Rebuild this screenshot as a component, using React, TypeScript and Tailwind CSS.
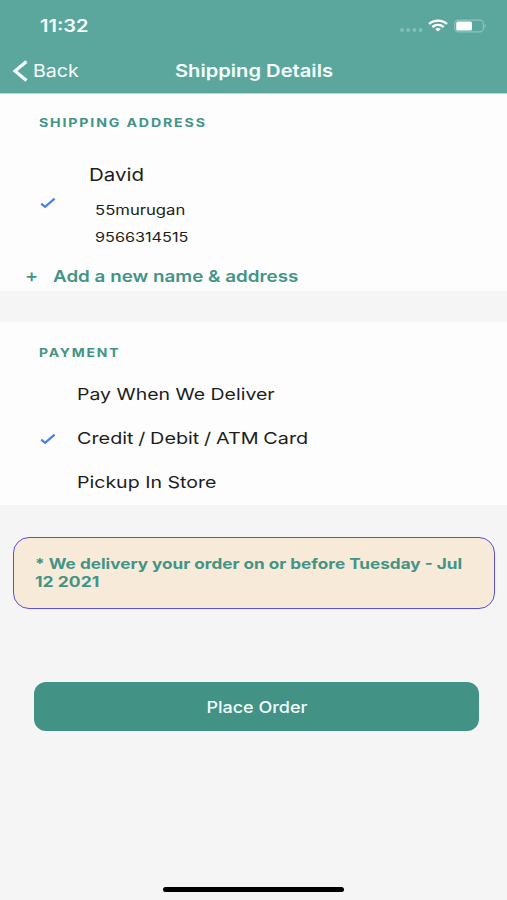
import * as React from "react"
import clsx from "clsx"

interface TextProps {
    className?: string
    children: React.ReactNode
}

// Wide lettering: every label sets its own horizontal scale
function Text({ className, children }: TextProps) {
    return <span className={clsx("block w-max origin-left whitespace-nowrap", className)}>{children}</span>
}

function Check() {
    return (
        <svg viewBox="0 0 16 12" className="h-3 w-4" fill="none" stroke="#4a7df0" strokeWidth="2.2">
            <path d="M1.2 6.6 L5.1 9.8 L14.6 1.6" />
        </svg>
    )
}

function StatusIcons() {
    return (
        <div className="flex items-center">
            <svg viewBox="0 0 24 6" className="mt-2 h-1.5 w-6" fill="#82c0b8">
                <circle cx="2" cy="3" r="1.9" />
                <circle cx="8.2" cy="3" r="1.9" />
                <circle cx="14.4" cy="3" r="1.9" />
                <circle cx="20.6" cy="3" r="1.9" />
            </svg>
            <svg viewBox="0 0 20 13" className="mb-0.5 ml-1 h-[13px] w-5" fill="none" stroke="#fff" strokeWidth="2.3">
                <path d="M1 4.9 C6 0.6 14 0.6 19 4.9" />
                <path d="M4.3 8 C7.6 5.2 12.4 5.2 15.7 8" />
                <path d="M10 12.6 L7.2 10 C8.6 8.8 11.4 8.8 12.8 10 Z" fill="#fff" stroke="none" />
            </svg>
            <svg viewBox="0 0 33 14" className="ml-1.5 h-3.5 w-[33px]">
                <rect x="0.6" y="1.1" width="28.8" height="11.8" rx="3.6" fill="none" stroke="#8cc5be" strokeWidth="1.1" />
                <rect x="2.2" y="2.4" width="15.8" height="9.2" rx="1.6" fill="#fff" />
                <path d="M30.6 5 C32.4 5.6 32.4 8.4 30.6 9 Z" fill="#8cc5be" />
            </svg>
        </div>
    )
}

function Header() {
    return (
        <header className="h-[94px] border-b border-[#b5d8d3] bg-[#5ba79d] text-[#f6fffd]">
            <div className="flex h-[52px] items-center justify-between pl-10 pr-5">
                <Text className="scale-x-[1.18] pt-0.5 text-[17px] font-semibold">11:32</Text>
                <StatusIcons />
            </div>
            <div className="flex h-[38px] items-center pl-3">
                <svg viewBox="0 0 16 22" className="h-[22px] w-4 shrink-0" fill="none" stroke="currentColor" strokeWidth="3.2">
                    <path d="M14.5 1.5 L3 11 L14.5 20.5" />
                </svg>
                <div className="ml-[5px] w-[142px] pt-0.5">
                    <Text className="scale-x-[1.15] text-[17px]">Back</Text>
                </div>
                <Text className="scale-x-[1.185] pt-0.5 text-[17px] font-semibold">Shipping Details</Text>
            </div>
        </header>
    )
}

const payments = [
    { name: "Pay When We Deliver", scale: "scale-x-[1.18]", selected: false },
    { name: "Credit / Debit / ATM Card", scale: "scale-x-[1.2] [word-spacing:-0.7px]", selected: true },
    { name: "Pickup In Store", scale: "scale-x-[1.185]", selected: false },
]

export default function App() {
    return (
        <div className="flex h-[900px] w-[507px] flex-col overflow-hidden bg-[#f5f5f5] font-['Inter',sans-serif] text-[#1d1d1d]">
            <Header />

            {/* Shipping address */}
            <section className="h-[197px] bg-[#fdfdfd] pt-[19px]">
                <h2 className="pl-[39px] text-[11.5px] leading-5 font-bold text-[#429487]">
                    <Text className="scale-x-[1.23] tracking-[1.5px]">SHIPPING ADDRESS</Text>
                </h2>
                <div className="mt-[30px] flex">
                    <div className="w-[89px] pt-[34px] pl-10">
                        <Check />
                    </div>
                    <div>
                        <Text className="scale-x-[1.17] text-[17.5px] leading-6">David</Text>
                        <div className="mt-[10px] pl-1.5 text-[13.5px] leading-[27px]">
                            <Text className="scale-x-[1.235]">55murugan</Text>
                            <Text className="scale-x-[1.2]">9566314515</Text>
                        </div>
                    </div>
                </div>
                <div className="mt-[13px] flex items-center pl-[25px] text-base leading-6 font-semibold text-[#429487]">
                    <div className="w-7">
                        <Text className="scale-x-[1.1] text-lg leading-6 font-medium">+</Text>
                    </div>
                    <Text className="scale-x-[1.175]">Add a new name &amp; address</Text>
                </div>
            </section>

            {/* Payment */}
            <section className="mt-[31px] h-[183px] bg-[#fdfdfd] pt-[21px]">
                <h2 className="pl-[39px] text-[11.5px] leading-5 font-bold text-[#429487]">
                    <Text className="scale-x-[1.21] tracking-[1.5px]">PAYMENT</Text>
                </h2>
                <ul className="mt-[9px]">
                    {payments.map(p => (
                        <li key={p.name} className="flex h-11 items-center">
                            <div className="w-[77px] pt-0.5 pl-10">{p.selected && <Check />}</div>
                            <Text className={clsx("text-[16.5px]", p.scale)}>{p.name}</Text>
                        </li>
                    ))}
                </ul>
            </section>

            {/* Delivery notice */}
            <div className="mr-3 ml-[13px] mt-8 h-[72px] rounded-2xl border border-[#5a4fdb] bg-[#f7ead9] pt-[17px] pl-[21px] text-[14.5px] leading-[18px] font-bold text-[#429487]">
                <Text className="scale-x-[1.183]">* We delivery your order on or before Tuesday - Jul</Text>
                <Text className="scale-x-[1.21]">12 2021</Text>
            </div>

            <button className="mt-[73px] ml-[34px] flex h-[49px] w-[445px] items-center justify-center rounded-xl bg-[#429385] text-[#f2fffc]">
                <span className="scale-x-[1.125] text-base font-medium">Place Order</span>
            </button>

            {/* Home indicator */}
            <div className="mx-auto mt-auto mb-2 h-[5px] w-[181px] rounded-full bg-black" />
        </div>
    )
}
